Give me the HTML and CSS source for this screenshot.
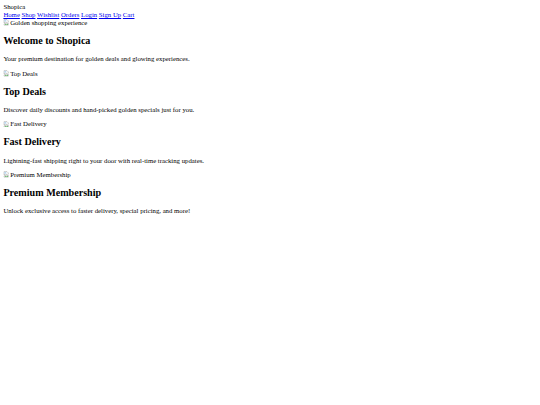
FILE: index.html
```html
<!DOCTYPE html>
<html lang="en">
<head>
<meta charset="utf-8">
<title>Shopica</title>
<link rel="stylesheet" href="styles.css">
</head>
<body>
<header class="site-header">
  <div class="logo">Shopica</div>
  <nav class="nav">
    <a href="#">Home</a>
    <a href="#">Shop</a>
    <a href="#">Wishlist</a>
    <a href="#">Orders</a>
    <a href="#">Login</a>
    <a href="#">Sign Up</a>
    <a href="#">Cart</a>
  </nav>
</header>
<main>
  <section class="block">
    <span class="broken-img"><svg class="broken-icon" viewBox="0 0 16 16"><path d="M2.5 1.5h7l3 3v3l-2 1.5-2-1.5-2 2-2-1.5-2 1.5z" fill="#fff" stroke="#8a8a8a"/><path d="M2.5 11.5v3h10v-5l-2 1.5-2-1.5-2 2-2-1.5z" fill="#fff" stroke="#8a8a8a"/><path d="M3.5 13.5l2.5-2 2 1.5 2-2 2 1.5v1z" fill="#4caf50"/><rect x="3.5" y="3" width="4" height="3" fill="#9ecbf0"/></svg>Golden shopping experience</span>
    <h2>Welcome to Shopica</h2>
    <p>Your premium destination for golden deals and glowing experiences.</p>
  </section>
  <section class="block">
    <span class="broken-img"><svg class="broken-icon" viewBox="0 0 16 16"><path d="M2.5 1.5h7l3 3v3l-2 1.5-2-1.5-2 2-2-1.5-2 1.5z" fill="#fff" stroke="#8a8a8a"/><path d="M2.5 11.5v3h10v-5l-2 1.5-2-1.5-2 2-2-1.5z" fill="#fff" stroke="#8a8a8a"/><path d="M3.5 13.5l2.5-2 2 1.5 2-2 2 1.5v1z" fill="#4caf50"/><rect x="3.5" y="3" width="4" height="3" fill="#9ecbf0"/></svg>Top Deals</span>
    <h2>Top Deals</h2>
    <p>Discover daily discounts and hand-picked golden specials just for you.</p>
  </section>
  <section class="block">
    <span class="broken-img"><svg class="broken-icon" viewBox="0 0 16 16"><path d="M2.5 1.5h7l3 3v3l-2 1.5-2-1.5-2 2-2-1.5-2 1.5z" fill="#fff" stroke="#8a8a8a"/><path d="M2.5 11.5v3h10v-5l-2 1.5-2-1.5-2 2-2-1.5z" fill="#fff" stroke="#8a8a8a"/><path d="M3.5 13.5l2.5-2 2 1.5 2-2 2 1.5v1z" fill="#4caf50"/><rect x="3.5" y="3" width="4" height="3" fill="#9ecbf0"/></svg>Fast Delivery</span>
    <h2>Fast Delivery</h2>
    <p>Lightning-fast shipping right to your door with real-time tracking updates.</p>
  </section>
  <section class="block">
    <span class="broken-img"><svg class="broken-icon" viewBox="0 0 16 16"><path d="M2.5 1.5h7l3 3v3l-2 1.5-2-1.5-2 2-2-1.5-2 1.5z" fill="#fff" stroke="#8a8a8a"/><path d="M2.5 11.5v3h10v-5l-2 1.5-2-1.5-2 2-2-1.5z" fill="#fff" stroke="#8a8a8a"/><path d="M3.5 13.5l2.5-2 2 1.5 2-2 2 1.5v1z" fill="#4caf50"/><rect x="3.5" y="3" width="4" height="3" fill="#9ecbf0"/></svg>Premium Membership</span>
    <h2>Premium Membership</h2>
    <p>Unlock exclusive access to faster delivery, special pricing, and more!</p>
  </section>
</main>
</body>
</html>
```
FILE: styles.css
```css
body {
  margin: 3.375px;
  font-family: "Liberation Serif", "Times New Roman", serif;
  font-size: 6.75px;
  line-height: 7.76px;
  color: #000;
  background: #fff;
}
.nav a {
  color: #0000ee;
  text-decoration: underline;
}
.broken-img {
  display: inline-block;
  color: #000;
}
.broken-icon {
  width: 6.75px;
  height: 6.75px;
  vertical-align: -1px;
}
h2 {
  font-size: 10.125px;
  line-height: 11.64px;
  font-weight: bold;
  margin: 8.4px 0;
}
p {
  margin: 6.75px 0;
}
```
